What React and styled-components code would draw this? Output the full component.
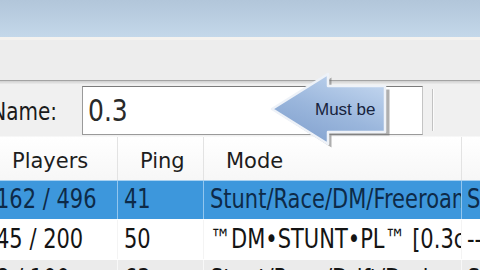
import React from "react";
import styled, { createGlobalStyle } from "styled-components";

const GlobalStyle = createGlobalStyle`
  html, body { margin: 0; padding: 0; background: #efefef; overflow: hidden; }
  * { box-sizing: border-box; }
`;

const Screen = styled.div`
  position: relative;
  width: 480px;
  height: 270px;
  overflow: hidden;
  display: flex;
  flex-direction: column;
  font-family: "DejaVu Sans", Verdana, sans-serif;
  background: #efefef;
`;

const TitleBand = styled.div`
  height: 37px;
  flex: none;
  background: linear-gradient(to bottom, #b2c6da 0%, #bcd0e3 60%, #c4d8ea 100%);
`;

const Glint = styled.div`
  height: 3px;
  flex: none;
  background: #f4f2ef;
`;

const ToolArea = styled.div`
  height: 40px;
  flex: none;
  background: #ededed;
`;

const GroupLine = styled.div`
  height: 4px;
  flex: none;
  border-top: 1px solid #a3a3a3;
  background: linear-gradient(to bottom, #cfcfcf, #ebebeb);
`;

const NameRow = styled.div`
  height: 52px;
  flex: none;
  display: flex;
  align-items: flex-start;
  background: #f0f0f0;
  padding-top: 2px;
`;

const Label = styled.div`
  width: 60px;
  height: 48px;
  display: flex;
  justify-content: flex-end;
  align-items: center;
  padding-right: 3px;
  padding-top: 3px;
  white-space: nowrap;
  color: #1a1a1a;
  font-size: 20px;
`;

const Stretch = styled.span`
  display: inline-block;
  transform: scaleY(${(p) => p.$k || 1.25});
  transform-origin: 50% 55%;
  white-space: nowrap;
`;

const InputBox = styled.div`
  margin-left: 22px;
  width: 341px;
  height: 49px;
  background: #ffffff;
  border: 1px solid #9a9a9a;
  border-top-color: #7b7b7b;
  border-right-color: #c4c4c4;
  display: flex;
  align-items: center;
  padding-left: 5px;
  padding-top: 1px;
  font-size: 25px;
  color: #2a2a2a;
`;

const Divider = styled.div`
  margin-left: 9px;
  margin-top: 3px;
  width: 2px;
  height: 42px;
  border-left: 1px solid #c2c2c2;
  border-right: 1px solid #fbfbfb;
`;

const Table = styled.div`
  margin-left: -10px;
  display: flex;
  flex-direction: column;
`;

const Row = styled.div`
  display: grid;
  grid-template-columns: 128px 86px 258px 40px;
  height: ${(p) => p.$h || 39}px;
  background: ${(p) => p.$bg};
  border-top: 1px solid ${(p) => p.$line || "transparent"};
`;

const HeadCell = styled.div`
  display: flex;
  align-items: center;
  padding-left: 22px;
  padding-top: 5px;
  font-size: 21px;
  color: #1d1d1d;
  border-right: 1px solid #e3e3e3;
  white-space: nowrap;
  overflow: hidden;
`;

const Cell = styled.div`
  display: flex;
  align-items: center;
  padding-left: ${(p) => p.$pad ?? 6}px;
  font-size: 21px;
  color: ${(p) => (p.$selected ? "#0d2a48" : "#141414")};
  border-right: 1px solid ${(p) => p.$sep};
  white-space: nowrap;
  overflow: hidden;
`;

const Callout = styled.svg`
  position: absolute;
  left: 266px;
  top: 70px;
  overflow: visible;
`;

const headers = ["Players", "Ping", "Mode", ""];

const rows = [
  { cells: ["162 / 496", "41", "Stunt/Race/DM/Freeroam", "S"], selected: true },
  { cells: ["45 / 200", "50", "™DM•STUNT•PL™ [0.3c]", "--"] },
  { cells: ["8 / 100", "63", "Stunt/Race/Drift/Derby", "S"], shaded: true },
];

function TableRows() {
  return rows.map((r, i) => {
    const bg = r.selected ? "#3d97dc" : r.shaded ? "#ebebeb" : "#ffffff";
    const sep = r.selected ? "#93c6ee" : r.shaded ? "#f8f8f8" : "#f4f4f4";
    return (
      <Row key={i} $bg={bg} $line={r.selected ? "#a8d1f1" : "#ffffff"} $h={r.selected ? 39 : 40}>
        {r.cells.map((c, j) => (
          <Cell key={j} $selected={r.selected} $sep={sep} $pad={j === 3 ? 5 : 6}>
            <Stretch $k={1.25}>{c}</Stretch>
          </Cell>
        ))}
      </Row>
    );
  });
}

export default function App() {
  return (
    <>
      <GlobalStyle />
      <Screen>
        <TitleBand />
        <Glint />
        <ToolArea />
        <GroupLine />
        <NameRow>
          <Label>
            <Stretch $k={1.25}>Name:</Stretch>
          </Label>
          <InputBox>
            <Stretch $k={1.2}>0.3</Stretch>
          </InputBox>
          <Divider />
        </NameRow>
        <Table>
          <Row $bg="linear-gradient(to bottom, #ffffff, #f7f7f7)" $h={44}>
            {headers.map((h, i) => (
              <HeadCell key={i}>{h}</HeadCell>
            ))}
          </Row>
          <TableRows />
        </Table>
        <Callout width="130" height="80" viewBox="0 0 130 80">
          <defs>
            <linearGradient id="arrowFill" x1="0" y1="1" x2="0.6" y2="0">
              <stop offset="0" stopColor="#7c9ccb" />
              <stop offset="0.55" stopColor="#9ab6dc" />
              <stop offset="1" stopColor="#bcd1ec" />
            </linearGradient>
          </defs>
          <path
            d="M8 41 L63 6 L63 18 L121 18 L121 64 L63 64 L63 76 Z"
            fill="#6e6e6e"
            opacity="0.55"
            transform="translate(2.5 1.5)"
          />
          <path
            d="M6 39 L62 4 L62 16 L119 16 L119 62 L62 62 L62 74 Z"
            fill="url(#arrowFill)"
            stroke="#eef2f8"
            strokeWidth="2.5"
            strokeLinejoin="round"
          />
          <text
            x="49"
            y="45"
            fontFamily="'Liberation Sans', Arial, sans-serif"
            fontSize="17"
            fill="#17233d"
          >
            Must be
          </text>
        </Callout>
      </Screen>
    </>
  );
}
